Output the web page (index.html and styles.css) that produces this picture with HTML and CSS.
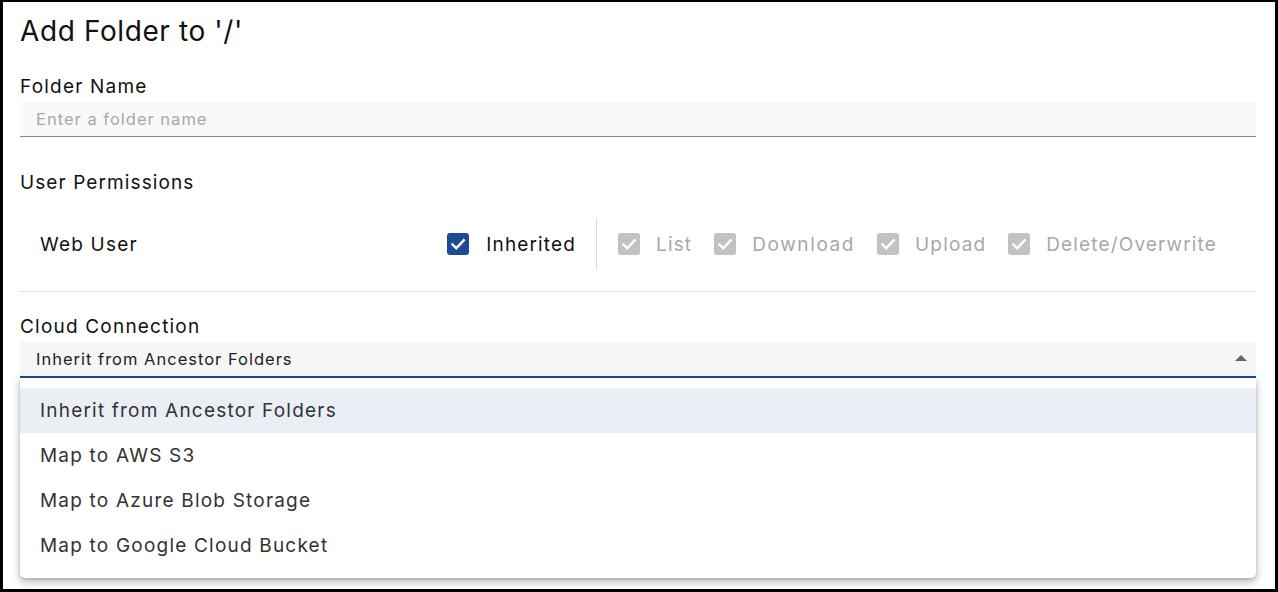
FILE: index.html
```html
<!DOCTYPE html>
<html>
<head>
<meta charset="utf-8">
<link rel="stylesheet" href="styles.css">
</head>
<body>
<div class="dialog">
  <h1 class="title">Add Folder to '/'</h1>

  <label class="field-label">Folder Name</label>
  <div class="input">Enter a folder name</div>

  <div class="section-label">User Permissions</div>
  <div class="perm-row">
    <div class="perm-user">Web User</div>
    <div class="perm-inherit">
      <span class="cb cb-on"><svg viewBox="0 0 22 22" width="22" height="22"><rect x="0" y="0" width="22" height="22" rx="3" fill="#1b4b94"/><path d="M5.5 11.5 L9.3 15.2 L16.8 7.3" fill="none" stroke="#fff" stroke-width="2.4" stroke-linecap="square"/></svg></span>
      <span class="cb-label">Inherited</span>
    </div>
    <div class="perm-divider"></div>
    <div class="perm-list">
      <div class="perm-item">
        <span class="cb"><svg viewBox="0 0 22 22" width="22" height="22"><rect x="0" y="0" width="22" height="22" rx="3" fill="#c2c2c2"/><path d="M5.5 11.5 L9.3 15.2 L16.8 7.3" fill="none" stroke="#fff" stroke-width="2.4" stroke-linecap="square"/></svg></span>
        <span class="cb-label dim">List</span>
      </div>
      <div class="perm-item">
        <span class="cb"><svg viewBox="0 0 22 22" width="22" height="22"><rect x="0" y="0" width="22" height="22" rx="3" fill="#c2c2c2"/><path d="M5.5 11.5 L9.3 15.2 L16.8 7.3" fill="none" stroke="#fff" stroke-width="2.4" stroke-linecap="square"/></svg></span>
        <span class="cb-label dim wide">Download</span>
      </div>
      <div class="perm-item">
        <span class="cb"><svg viewBox="0 0 22 22" width="22" height="22"><rect x="0" y="0" width="22" height="22" rx="3" fill="#c2c2c2"/><path d="M5.5 11.5 L9.3 15.2 L16.8 7.3" fill="none" stroke="#fff" stroke-width="2.4" stroke-linecap="square"/></svg></span>
        <span class="cb-label dim">Upload</span>
      </div>
      <div class="perm-item">
        <span class="cb"><svg viewBox="0 0 22 22" width="22" height="22"><rect x="0" y="0" width="22" height="22" rx="3" fill="#c2c2c2"/><path d="M5.5 11.5 L9.3 15.2 L16.8 7.3" fill="none" stroke="#fff" stroke-width="2.4" stroke-linecap="square"/></svg></span>
        <span class="cb-label dim">Delete/Overwrite</span>
      </div>
    </div>
  </div>

  <label class="field-label cloud-label">Cloud Connection</label>
  <div class="select-wrap">
    <div class="select">
      <span class="select-value">Inherit from Ancestor Folders</span>
      <svg class="select-arrow" viewBox="0 0 12 6" width="12" height="6"><path d="M0 6 L6 0 L12 6 Z" fill="#666"/></svg>
    </div>
    <ul class="menu">
      <li class="menu-item active">Inherit from Ancestor Folders</li>
      <li class="menu-item">Map to AWS S3</li>
      <li class="menu-item">Map to Azure Blob Storage</li>
      <li class="menu-item">Map to Google Cloud Bucket</li>
    </ul>
  </div>
</div>
</body>
</html>
```
FILE: styles.css
```css
html, body {
  margin: 0;
  padding: 0;
  height: 100%;
}
body {
  font-family: "Inter", "Open Sans", sans-serif;
  color: #111;
  background: #fff;
}
.dialog {
  box-sizing: border-box;
  height: 592px;
  border-style: solid;
  border-color: #000;
  border-width: 2px 3px 3px 3px;
  padding: 0 19px 0 17px;
  display: flex;
  flex-direction: column;
}
.title {
  margin: 11px 0 0 0;
  font-size: 28px;
  font-weight: 400;
  line-height: 36px;
  letter-spacing: 0.6px;
  color: #111;
}
.field-label {
  display: block;
  margin-top: 26px;
  margin-bottom: 3px;
  font-size: 19px;
  line-height: 24px;
  letter-spacing: 1.2px;
  color: #111;
}
.input {
  height: 35px;
  box-sizing: border-box;
  background: #f9f9f9;
  border-bottom: 1px solid #8a8a8a;
  padding: 0 16px;
  display: flex;
  align-items: center;
  font-size: 16.5px;
  letter-spacing: 1px;
  color: #a8a8a8;
}
.section-label {
  margin-top: 34px;
  font-size: 19px;
  line-height: 24px;
  letter-spacing: 1.1px;
  color: #111;
}
.perm-row {
  margin-top: 23px;
  height: 74px;
  box-sizing: border-box;
  border-bottom: 1px solid #e2e2e2;
  padding: 0 39px 21px 20px;
  display: flex;
  align-items: stretch;
}
.perm-user {
  flex: 1;
  display: flex;
  align-items: center;
  font-size: 19px;
  letter-spacing: 1.2px;
}
.perm-inherit {
  display: flex;
  align-items: center;
  padding-right: 20px;
}
.perm-divider {
  width: 1px;
  background: #dcdcdc;
}
.perm-list {
  display: flex;
  align-items: center;
  gap: 22px;
  padding-left: 21px;
}
.perm-item {
  display: flex;
  align-items: center;
}
.cb {
  display: inline-flex;
  width: 22px;
  height: 22px;
  margin-right: 16px;
}
.cb-on {
  margin-right: 17px;
}
.cb-label {
  font-size: 19px;
  letter-spacing: 1.15px;
  color: #111;
}
.cb-label.wide {
  letter-spacing: 1.6px;
}
.cb-label.dim {
  color: #a8a8a8;
}
.cloud-label {
  margin-top: 23px;
}
.select-wrap {
  position: relative;
}
.select {
  height: 36px;
  box-sizing: border-box;
  background: #f6f6f6;
  border-bottom: 2px solid #1b4b94;
  padding: 0 9px 0 16px;
  display: flex;
  align-items: center;
  justify-content: space-between;
}
.select-value {
  font-size: 16.5px;
  letter-spacing: 1px;
  color: #222;
}
.select-arrow {
  margin-top: -2px;
}
.menu {
  position: absolute;
  left: 0;
  right: 0;
  top: 36px;
  margin: 0;
  padding: 10px 0 10px 0;
  list-style: none;
  background: #fff;
  border-radius: 0 0 5px 5px;
  box-shadow: 0 4px 9px rgba(0,0,0,0.28), 0 1px 3px rgba(0,0,0,0.15);
}
.menu-item {
  height: 45px;
  display: flex;
  align-items: center;
  padding-left: 20px;
  font-size: 19px;
  letter-spacing: 1.2px;
  color: #333;
}
.menu-item.active {
  background: #eaeef5;
}
```
